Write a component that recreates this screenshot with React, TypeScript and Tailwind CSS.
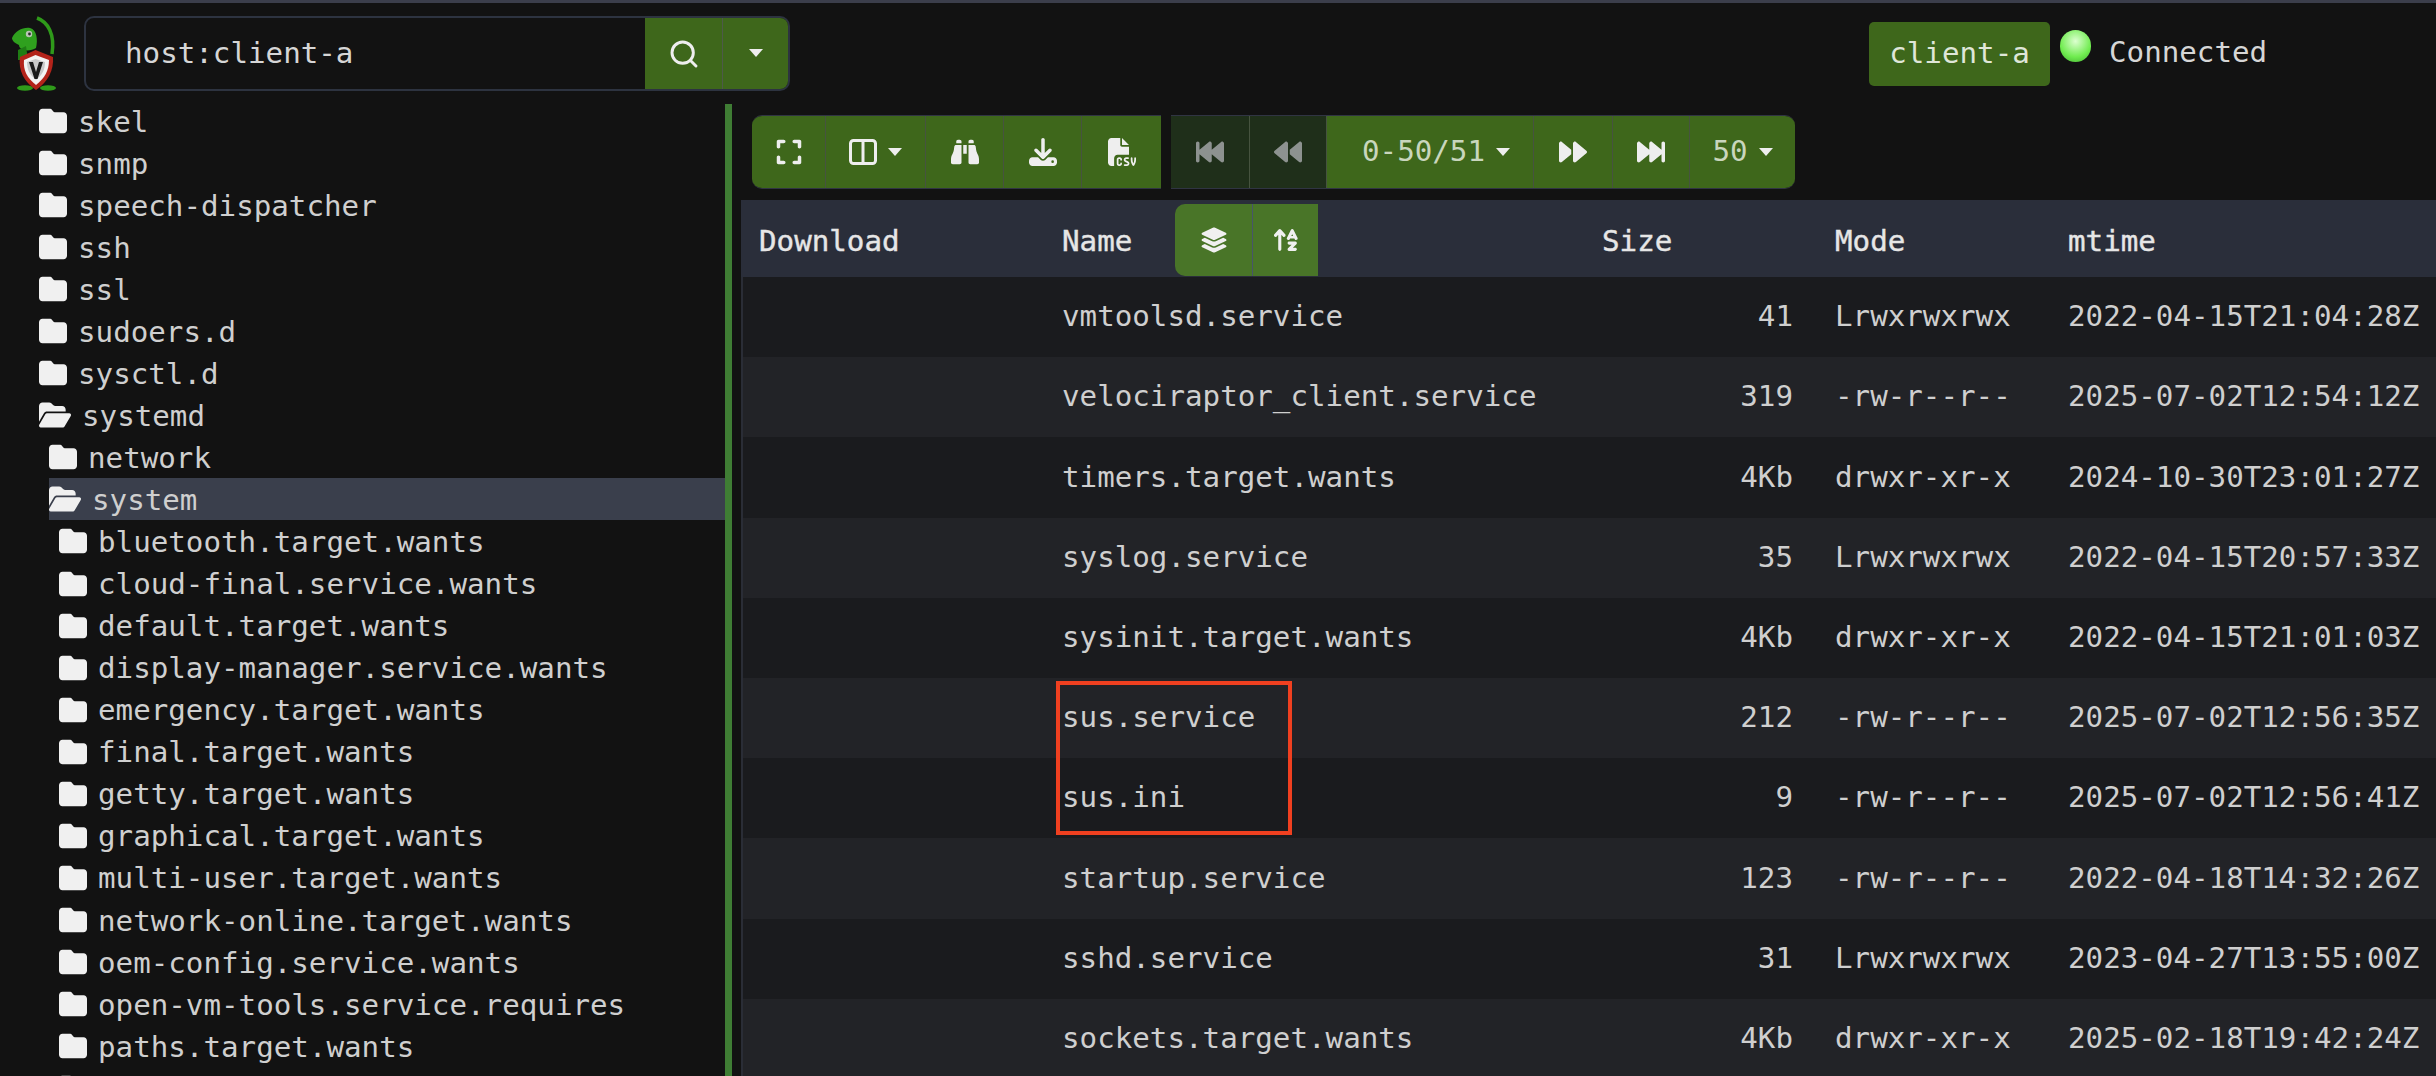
import { Search } from "lucide-react";
import {
  FaFolder,
  FaFolderOpen,
  FaExpand,
  FaBinoculars,
  FaDownload,
  FaFileCsv,
  FaBackwardFast,
  FaBackward,
  FaForward,
  FaForwardFast,
  FaLayerGroup,
  FaArrowUpAZ,
} from "react-icons/fa6";

interface TreeRow {
  name: string;
  level: number;
  open?: boolean;
  selected?: boolean;
}

const tree: TreeRow[] = [
  { name: "skel", level: 0 },
  { name: "snmp", level: 0 },
  { name: "speech-dispatcher", level: 0 },
  { name: "ssh", level: 0 },
  { name: "ssl", level: 0 },
  { name: "sudoers.d", level: 0 },
  { name: "sysctl.d", level: 0 },
  { name: "systemd", level: 0, open: true },
  { name: "network", level: 1 },
  { name: "system", level: 1, open: true, selected: true },
  { name: "bluetooth.target.wants", level: 2 },
  { name: "cloud-final.service.wants", level: 2 },
  { name: "default.target.wants", level: 2 },
  { name: "display-manager.service.wants", level: 2 },
  { name: "emergency.target.wants", level: 2 },
  { name: "final.target.wants", level: 2 },
  { name: "getty.target.wants", level: 2 },
  { name: "graphical.target.wants", level: 2 },
  { name: "multi-user.target.wants", level: 2 },
  { name: "network-online.target.wants", level: 2 },
  { name: "oem-config.service.wants", level: 2 },
  { name: "open-vm-tools.service.requires", level: 2 },
  { name: "paths.target.wants", level: 2 },
  { name: "printer.target.wants", level: 2 },
];

const files = [
  ["vmtoolsd.service", "41", "Lrwxrwxrwx", "2022-04-15T21:04:28Z"],
  ["velociraptor_client.service", "319", "-rw-r--r--", "2025-07-02T12:54:12Z"],
  ["timers.target.wants", "4Kb", "drwxr-xr-x", "2024-10-30T23:01:27Z"],
  ["syslog.service", "35", "Lrwxrwxrwx", "2022-04-15T20:57:33Z"],
  ["sysinit.target.wants", "4Kb", "drwxr-xr-x", "2022-04-15T21:01:03Z"],
  ["sus.service", "212", "-rw-r--r--", "2025-07-02T12:56:35Z"],
  ["sus.ini", "9", "-rw-r--r--", "2025-07-02T12:56:41Z"],
  ["startup.service", "123", "-rw-r--r--", "2022-04-18T14:32:26Z"],
  ["sshd.service", "31", "Lrwxrwxrwx", "2023-04-27T13:55:00Z"],
  ["sockets.target.wants", "4Kb", "drwxr-xr-x", "2025-02-18T19:42:24Z"],
];

const Caret = () => (
  <span className="inline-block border-x-[7px] border-t-[8px] border-x-transparent border-t-[#eeeeee]" />
);

const Logo = () => (
  <svg width="60" height="85" viewBox="0 0 60 85" className="mt-[7px] shrink-0">
    <path d="M37 8 C48 12 55 24 52 44" fill="none" stroke="#2f9a1a" strokeWidth="3.5" />
    <path d="M12 28 C15 21 23 17 30 18 C37 20 38 30 36 38 C30 42 19 41 19 35 C15 33 12 31 12 28 Z" fill="#2fa01e" />
    <path d="M18 40 L26 36 L28 50 L18 50 Z" fill="#1f7d14" />
    <circle cx="29" cy="24" r="3.2" fill="#b9c4b5" />
    <circle cx="29.5" cy="24" r="1.4" fill="#2b2b2b" />
    <ellipse cx="25" cy="78" rx="8" ry="2.8" fill="#2f9a1a" />
    <ellipse cx="48" cy="78" rx="8" ry="2.8" fill="#2f9a1a" />
    <path d="M35.5 40 L53 47 C54 60 48 72 36 80 C24 72 18 60 20 47 Z" fill="#b3231a" />
    <path d="M35.5 45 L49 50 C49 60 45 68 36 75 C27 68 23 60 24 50 Z" fill="#f3f3f3" />
    <path d="M35.5 49 L45 52 C45 60 42 65 36 70 C30 65 27 60 27 52 Z" fill="#c9c9c9" />
    <path d="M29 52 L33 52 L36 62 L39 52 L43 52 L37.5 69 L34.5 69 Z" fill="#1a1a1a" />
  </svg>
);

const ColumnsIcon = () => (
  <svg width="28" height="26" viewBox="0 0 28 26" fill="none" stroke="#eeeeee" strokeWidth="3">
    <rect x="1.5" y="1.5" width="25" height="23" rx="3" />
    <path d="M14 2 V24" />
  </svg>
);

const ToolButton = ({
  className,
  dim,
  children,
}: {
  className: string;
  dim?: boolean;
  children: React.ReactNode;
}) => (
  <button
    className={`flex h-full items-center justify-center gap-[11px] border-r border-[#46533f] last:border-r-0 ${
      dim ? "bg-[#1f2f1a] text-[#8d9290]" : "bg-[#3e671b] text-[#eeeeee]"
    } ${className}`}
  >
    {children}
  </button>
);

export default function App() {
  return (
    <div
      className="relative h-[1076px] w-[2436px] overflow-hidden border-t-[3px] border-[#3b3e4b] bg-[#121212] text-[29.2px] text-[#cfcfcf]"
      style={{ fontFamily: '"DejaVu Sans Mono", "Liberation Mono", monospace' }}
    >
      {/* Top bar */}
      <div className="flex h-[97px] items-start">
        <div className="w-[84px] shrink-0">
          <Logo />
        </div>
        <div className="mt-[13px] flex h-[75px] w-[706px] overflow-hidden rounded-[10px] border-2 border-[#2d3340]">
          <div className="flex flex-1 items-center pl-[39px] text-[#d6d6d6]">host:client-a</div>
          <button className="flex w-[78px] items-center justify-center border-r border-[#4d5a48] bg-[#3e671b] text-[#eeeeee]">
            <Search size={32} strokeWidth={2.2} />
          </button>
          <button className="flex w-[65px] items-start justify-center bg-[#3e671b] pt-[31px]">
            <Caret />
          </button>
        </div>
        <div className="ml-[1079px] mt-[19px] flex h-[64px] w-[181px] items-center justify-center rounded-[5px] bg-[#3e671b] text-[#dfe6d8]">
          client-a
        </div>
        <span className="ml-[10px] mt-[27px] h-[32px] w-[31px] rounded-full bg-[radial-gradient(circle_at_50%_35%,#dcffd0,#70ec50_60%,#3fae2e)]" />
        <span className="ml-[18px] mt-[28px] text-[#d6d6d6]">Connected</span>
      </div>

      <div className="flex h-[976px]">
        {/* File tree */}
        <div className="w-[725px] shrink-0 overflow-hidden">
          {tree.map((row) => (
            <div
              key={row.name}
              className={`flex h-[42.05px] items-center gap-[11px] whitespace-nowrap ${
                row.level === 0 ? "ml-[39px]" : row.level === 1 ? "ml-[49px]" : "ml-[59px]"
              } ${row.selected ? "bg-[#3a3f4c]" : ""}`}
            >
              <span className="flex w-fit shrink-0 text-[#f0f0f0]">
                {row.open ? <FaFolderOpen size={32} /> : <FaFolder size={28} />}
              </span>
              <span className="pt-[3px]">{row.name}</span>
            </div>
          ))}
        </div>

        {/* Splitter */}
        <div className="mt-[4px] w-[7px] shrink-0 bg-[#3f7d34]" />

        {/* File list */}
        <div className="min-w-0 flex-1 pl-[9px] pt-[15px]">
          <div className="ml-[11px] flex h-[74px] gap-[10px]">
            <div className="flex overflow-hidden rounded-l-[10px] border-y border-[#303443]">
              <ToolButton className="w-[74px]">
                <FaExpand size={28} />
              </ToolButton>
              <ToolButton className="w-[100px]">
                <ColumnsIcon />
                <Caret />
              </ToolButton>
              <ToolButton className="w-[78px]">
                <FaBinoculars size={28} />
              </ToolButton>
              <ToolButton className="w-[78px]">
                <FaDownload size={28} />
              </ToolButton>
              <ToolButton className="w-[79px]">
                <FaFileCsv size={28} />
              </ToolButton>
            </div>
            <div className="flex overflow-hidden rounded-r-[10px] border-y border-[#303443]">
              <ToolButton dim className="w-[79px]">
                <FaBackwardFast size={28} />
              </ToolButton>
              <ToolButton dim className="w-[77px]">
                <FaBackward size={28} />
              </ToolButton>
              <ToolButton className="w-[207px] pl-[12px] !text-[#c9d6bd]">
                <span>0-50/51</span>
                <Caret />
              </ToolButton>
              <ToolButton className="w-[79px]">
                <FaForward size={28} />
              </ToolButton>
              <ToolButton className="w-[77px]">
                <FaForwardFast size={28} />
              </ToolButton>
              <ToolButton className="w-[105px] !text-[#c9d6bd]">
                <span>50</span>
                <Caret />
              </ToolButton>
            </div>
          </div>

          <div className="mt-[11px]">
            {/* Header */}
            <div className="grid h-[77px] grid-cols-[303px_540px_233px_233px_1fr] items-center bg-[#2a2e3a] pl-[18px] pt-[6px] text-[#e6e6e6] [-webkit-text-stroke:0.4px_#e6e6e6]">
              <div>Download</div>
              <div className="flex items-center">
                <span>Name</span>
                <div className="-mt-[3px] ml-[43px] flex h-[72px] overflow-hidden rounded-l-[10px] bg-[#497528] text-[#f0f0f0]">
                  <button className="flex w-[78px] items-center justify-center border-r border-[#47556a]">
                    <FaLayerGroup size={28} />
                  </button>
                  <button className="flex w-[65px] items-center justify-center">
                    <FaArrowUpAZ size={28} />
                  </button>
                </div>
              </div>
              <div>Size</div>
              <div>Mode</div>
              <div>mtime</div>
            </div>

            {/* Rows */}
            {files.map(([name, size, mode, mtime], i) => (
              <div
                key={name}
                className={`grid h-[80.2px] grid-cols-[303px_540px_233px_233px_1fr] items-center border-l-2 border-[#2a2d36] pl-[16px] ${
                  i % 2 === 1 ? "bg-[#222327]" : "bg-[#1a1b1e]"
                }`}
              >
                <div />
                <div>{name}</div>
                <div className="pr-[42px] text-right">{size}</div>
                <div>{mode}</div>
                <div>{mtime}</div>
              </div>
            ))}
          </div>
        </div>
      </div>

      {/* Annotation */}
      <div className="absolute left-[1056px] top-[678px] h-[154px] w-[236px] border-4 border-[#f04020]" />
    </div>
  );
}
